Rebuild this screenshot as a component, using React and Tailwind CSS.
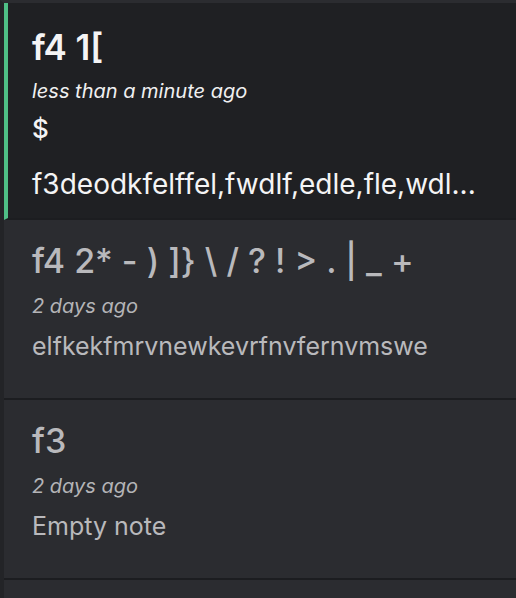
import React from "react";

const font = { fontFamily: "Inter, 'Noto Sans', sans-serif" };

function Card({ title, meta, lines, active }) {
  return (
    <div
      className={
        active
          ? "bg-[#1f2023] border-l-4 border-[#4fbf86] pl-6 pr-4 pt-[24px] pb-[17px] border-b-2 border-b-[#1c1d20]"
          : "bg-[#2b2c30] pl-7 pr-4 pt-[21px] h-[180px] border-b-2 border-b-[#1c1d20]"
      }
    >
      <div
        className={
          active
            ? "text-[35px] leading-[40px] font-semibold text-[#f4f4f5] whitespace-nowrap"
            : "text-[34px] leading-[40px] font-medium text-[#b9b9bc] whitespace-nowrap"
        }
      >
        {title}
      </div>
      <div
        className={
          active
            ? "mt-[12px] text-[20px] leading-[24px] italic text-[#f0f0f1]"
            : "mt-[13px] text-[20px] leading-[24px] italic text-[#b4b4b7]"
        }
      >
        {meta}
      </div>
      {active ? (
        <>
          <div className="mt-[9px] text-[26px] leading-[34px] text-[#f4f4f5] font-medium">$</div>
          <div className="mt-[21px] text-[28px] leading-[34px] text-[#f4f4f5] whitespace-nowrap">
            {lines}
          </div>
        </>
      ) : (
        <div className="mt-[13px] text-[25px] leading-[30px] text-[#b9b9bc] whitespace-nowrap">{lines}</div>
      )}
    </div>
  );
}

export default function App() {
  return (
    <div
      style={font}
      className="w-[516px] h-[598px] overflow-hidden bg-[#2b2c30] border-t-[3px] border-[#2b2c30] border-l-4 border-l-[#232427]"
    >
      <Card
        active
        title="f4 1["
        meta="less than a minute ago"
        lines="f3deodkfelffel,fwdlf,edle,fle,wdl..."
      />
      <Card
        title="f4 2* - ) ]} \ / ? ! > . | _ +"
        meta="2 days ago"
        lines="elfkekfmrvnewkevrfnvfernvmswe"
      />
      <Card title="f3" meta="2 days ago" lines="Empty note" />
      <div className="h-[40px] bg-[#2b2c30]" />
    </div>
  );
}
